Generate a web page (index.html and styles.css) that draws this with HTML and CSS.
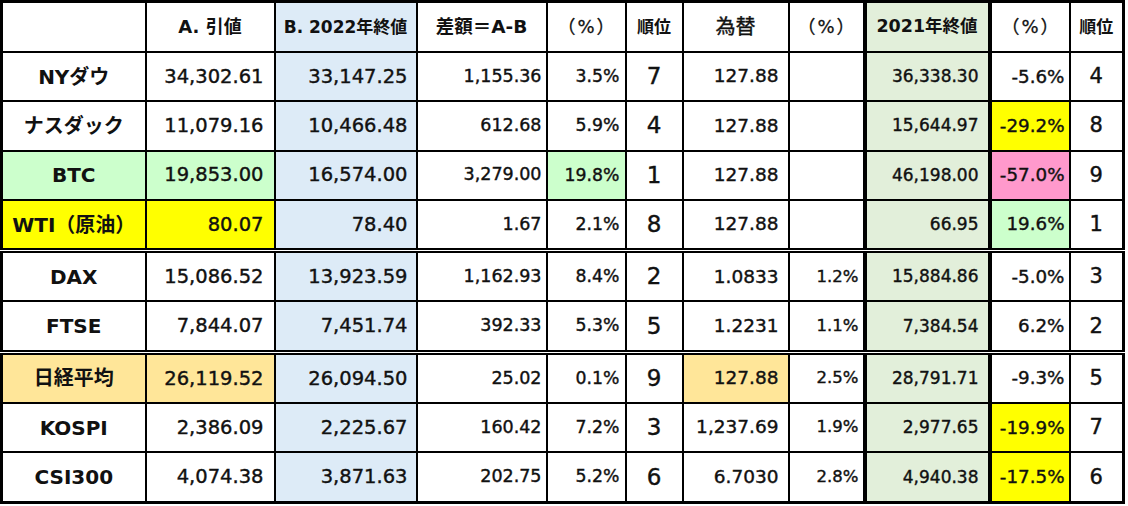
FILE: index.html
```html
<!DOCTYPE html>
<html lang="ja">
<head>
<meta charset="utf-8">
<title>指数比較</title>
<link rel="stylesheet" href="styles.css">
</head>
<body>
<table class="sheet">
  <colgroup>
    <col class="w-name"><col class="w-a"><col class="w-b"><col class="w-diff"><col class="w-pct"><col class="w-rank">
    <col class="w-fx"><col class="w-fxpct"><col class="w-2021"><col class="w-pct21"><col class="w-rank21">
  </colgroup>
  <thead>
    <tr class="head">
      <th class="name"></th>
      <th class="h-a">A. 引値</th>
      <th class="blue h-b">B. 2022年終値</th>
      <th class="h-diff">差額＝A-B</th>
      <th class="h-paren">（%）</th>
      <th class="h-rank">順位</th>
      <th class="h-fx">為替</th>
      <th class="h-paren thick-r">（%）</th>
      <th class="green h-2021 thick-r">2021年終値</th>
      <th class="h-paren">（%）</th>
      <th class="h-rank">順位</th>
    </tr>
  </thead>
  <tbody>
    <tr>
      <td class="name">NYダウ</td><td class="a">34,302.61</td><td class="b blue">33,147.25</td><td class="diff">1,155.36</td><td class="pct">3.5%</td><td class="rank">7</td><td class="fx">127.88</td><td class="fxpct thick-r"></td><td class="v21 green thick-r">36,338.30</td><td class="pct21">-5.6%</td><td class="rank21">4</td>
    </tr>
    <tr>
      <td class="name">ナスダック</td><td class="a">11,079.16</td><td class="b blue">10,466.48</td><td class="diff">612.68</td><td class="pct">5.9%</td><td class="rank">4</td><td class="fx">127.88</td><td class="fxpct thick-r"></td><td class="v21 green thick-r">15,644.97</td><td class="pct21 yellow">-29.2%</td><td class="rank21">8</td>
    </tr>
    <tr>
      <td class="name mint">BTC</td><td class="a mint">19,853.00</td><td class="b blue">16,574.00</td><td class="diff">3,279.00</td><td class="pct mint">19.8%</td><td class="rank">1</td><td class="fx">127.88</td><td class="fxpct thick-r"></td><td class="v21 green thick-r">46,198.00</td><td class="pct21 pink">-57.0%</td><td class="rank21">9</td>
    </tr>
    <tr class="sep">
      <td class="name yellow">WTI（原油）</td><td class="a yellow">80.07</td><td class="b blue">78.40</td><td class="diff">1.67</td><td class="pct">2.1%</td><td class="rank">8</td><td class="fx">127.88</td><td class="fxpct thick-r"></td><td class="v21 green thick-r">66.95</td><td class="pct21 mint">19.6%</td><td class="rank21">1</td>
    </tr>
    <tr>
      <td class="name">DAX</td><td class="a">15,086.52</td><td class="b blue">13,923.59</td><td class="diff">1,162.93</td><td class="pct">8.4%</td><td class="rank">2</td><td class="fx">1.0833</td><td class="fxpct thick-r">1.2%</td><td class="v21 green thick-r">15,884.86</td><td class="pct21">-5.0%</td><td class="rank21">3</td>
    </tr>
    <tr class="sep">
      <td class="name">FTSE</td><td class="a">7,844.07</td><td class="b blue">7,451.74</td><td class="diff">392.33</td><td class="pct">5.3%</td><td class="rank">5</td><td class="fx">1.2231</td><td class="fxpct thick-r">1.1%</td><td class="v21 green thick-r">7,384.54</td><td class="pct21">6.2%</td><td class="rank21">2</td>
    </tr>
    <tr>
      <td class="name gold">日経平均</td><td class="a gold">26,119.52</td><td class="b blue">26,094.50</td><td class="diff">25.02</td><td class="pct">0.1%</td><td class="rank">9</td><td class="fx gold">127.88</td><td class="fxpct thick-r">2.5%</td><td class="v21 green thick-r">28,791.71</td><td class="pct21">-9.3%</td><td class="rank21">5</td>
    </tr>
    <tr>
      <td class="name">KOSPI</td><td class="a">2,386.09</td><td class="b blue">2,225.67</td><td class="diff">160.42</td><td class="pct">7.2%</td><td class="rank">3</td><td class="fx">1,237.69</td><td class="fxpct thick-r">1.9%</td><td class="v21 green thick-r">2,977.65</td><td class="pct21 yellow">-19.9%</td><td class="rank21">7</td>
    </tr>
    <tr>
      <td class="name">CSI300</td><td class="a">4,074.38</td><td class="b blue">3,871.63</td><td class="diff">202.75</td><td class="pct">5.2%</td><td class="rank">6</td><td class="fx">6.7030</td><td class="fxpct thick-r">2.8%</td><td class="v21 green thick-r">4,940.38</td><td class="pct21 yellow">-17.5%</td><td class="rank21">6</td>
    </tr>
  </tbody>
</table>
</body>
</html>
```

FILE: styles.css
```css
html, body {
  margin: 0;
  padding: 0;
  background: #ffffff;
}

.sheet {
  border-collapse: collapse;
  table-layout: fixed;
  width: 1122px;
  font-family: "DejaVu Sans", "Noto Sans CJK JP", sans-serif;
  color: #111;
  border: 3px solid #000;
  text-spacing-trim: space-all;
}

.w-name { width: 144px; }
.w-a { width: 129px; }
.w-b { width: 142px; }
.w-diff { width: 130px; }
.w-pct { width: 79px; }
.w-rank { width: 57px; }
.w-fx { width: 106px; }
.w-fxpct { width: 76px; }
.w-2021 { width: 125px; }
.w-pct21 { width: 80px; }
.w-rank21 { width: 54px; }

.sheet th,
.sheet td {
  border: 2px solid #000;
  height: 47.3px;
  padding: 0;
  line-height: 1;
  white-space: nowrap;
  overflow: hidden;
}

.sheet th {
  height: 48px;
  font-weight: 700;
  text-align: center;
}

.sheet td {
  text-align: right;
  font-weight: 400;
  -webkit-text-stroke: 0.4px #111;
}

.sheet .thick-r { border-right: 4px solid #000; }

.sep td { border-bottom: 5px double #000; }

/* header */
.h-a { font-size: 18px; }
.h-b { font-size: 17px; }
.h-diff { font-size: 18.5px; }
.h-paren {
  font-size: 18px;
  font-weight: 400 !important;
  letter-spacing: 2px;
  padding-left: 2px !important;
  -webkit-text-stroke: 0.3px #111;
}
.h-rank { font-size: 17px; }
.h-fx { font-size: 20px; font-weight: 400 !important; -webkit-text-stroke: 0.4px #111; }
.h-2021 { font-size: 17.5px; }

/* body cells */
.sheet td.name { text-align: center; font-weight: 700; font-size: 20px; -webkit-text-stroke: 0; }
.sheet td.a { font-size: 19.5px; padding-right: 10px; }
.sheet td.b { font-size: 19.5px; padding-right: 8px; }
.sheet td.diff { font-size: 17.5px; padding-right: 4px; }
.sheet td.pct { font-size: 17.3px; padding-right: 5px; }
.sheet td.rank { text-align: center; font-size: 23px; }
.sheet td.fx { font-size: 18.5px; padding-right: 9px; }
.sheet td.fxpct { font-size: 16.5px; padding-right: 4px; }
.sheet td.v21 { font-size: 17px; padding-right: 9px; }
.sheet td.pct21 { font-size: 18.3px; padding-right: 4px; }
.sheet td.rank21 { text-align: center; font-size: 21px; }

/* fills */
.blue { background: #ddebf7; }
.green { background: #e2efda; }
.mint { background: #ccffcc; }
.yellow { background: #ffff00; }
.gold { background: #ffe699; }
.pink { background: #ff99cc; }
```
